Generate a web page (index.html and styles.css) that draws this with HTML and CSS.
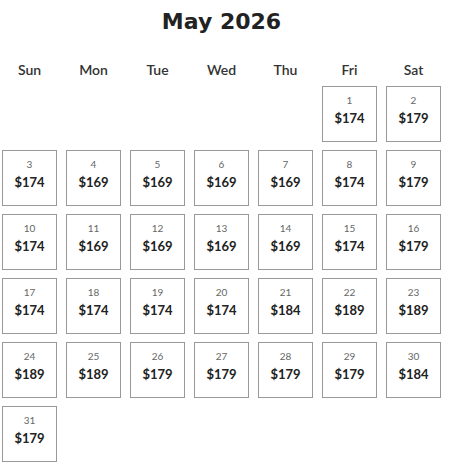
FILE: index.html
```html
<!DOCTYPE html>
<html>
<head>
<meta charset="utf-8">
<link rel="stylesheet" href="styles.css">
</head>
<body>
<div class="cal">
  <h1 class="title">May 2026</h1>
  <div class="grid">
    <div class="dow">Sun</div><div class="dow">Mon</div><div class="dow">Tue</div><div class="dow">Wed</div><div class="dow">Thu</div><div class="dow">Fri</div><div class="dow">Sat</div>
    <div class="empty"></div><div class="empty"></div><div class="empty"></div><div class="empty"></div><div class="empty"></div>
    <div class="day"><span class="d">1</span><span class="p">$174</span></div>
    <div class="day"><span class="d">2</span><span class="p">$179</span></div>
    <div class="day"><span class="d">3</span><span class="p">$174</span></div>
    <div class="day"><span class="d">4</span><span class="p">$169</span></div>
    <div class="day"><span class="d">5</span><span class="p">$169</span></div>
    <div class="day"><span class="d">6</span><span class="p">$169</span></div>
    <div class="day"><span class="d">7</span><span class="p">$169</span></div>
    <div class="day"><span class="d">8</span><span class="p">$174</span></div>
    <div class="day"><span class="d">9</span><span class="p">$179</span></div>
    <div class="day"><span class="d">10</span><span class="p">$174</span></div>
    <div class="day"><span class="d">11</span><span class="p">$169</span></div>
    <div class="day"><span class="d">12</span><span class="p">$169</span></div>
    <div class="day"><span class="d">13</span><span class="p">$169</span></div>
    <div class="day"><span class="d">14</span><span class="p">$169</span></div>
    <div class="day"><span class="d">15</span><span class="p">$174</span></div>
    <div class="day"><span class="d">16</span><span class="p">$179</span></div>
    <div class="day"><span class="d">17</span><span class="p">$174</span></div>
    <div class="day"><span class="d">18</span><span class="p">$174</span></div>
    <div class="day"><span class="d">19</span><span class="p">$174</span></div>
    <div class="day"><span class="d">20</span><span class="p">$174</span></div>
    <div class="day"><span class="d">21</span><span class="p">$184</span></div>
    <div class="day"><span class="d">22</span><span class="p">$189</span></div>
    <div class="day"><span class="d">23</span><span class="p">$189</span></div>
    <div class="day"><span class="d">24</span><span class="p">$189</span></div>
    <div class="day"><span class="d">25</span><span class="p">$189</span></div>
    <div class="day"><span class="d">26</span><span class="p">$179</span></div>
    <div class="day"><span class="d">27</span><span class="p">$179</span></div>
    <div class="day"><span class="d">28</span><span class="p">$179</span></div>
    <div class="day"><span class="d">29</span><span class="p">$179</span></div>
    <div class="day"><span class="d">30</span><span class="p">$184</span></div>
    <div class="day"><span class="d">31</span><span class="p">$179</span></div>
  </div>
</div>
</body>
</html>
```
FILE: styles.css
```css
html, body {
  margin: 0;
  padding: 0;
  background: #fff;
}
body {
  font-family: Lato, "Noto Sans", sans-serif;
  color: #222;
}
.cal {
  width: 439px;
  padding: 0 2px;
}
.title {
  margin: 0;
  padding-top: 9px;
  height: 50px;
  box-sizing: border-box;
  text-align: center;
  font-family: "DejaVu Sans", Lato, sans-serif;
  font-size: 22px;
  line-height: 26px;
  font-weight: 700;
  color: #222;
}
.grid {
  display: grid;
  grid-template-columns: repeat(7, 55px);
  column-gap: 9px;
  row-gap: 8px;
}
.dow {
  text-align: center;
  font-size: 14px;
  font-weight: 600;
  line-height: 16px;
  height: 28px;
  padding-top: 12px;
  box-sizing: border-box;
  color: #333;
}
.day {
  height: 56px;
  box-sizing: border-box;
  border: 1px solid #999;
  display: flex;
  flex-direction: column;
  align-items: center;
  padding-top: 7px;
}
.d {
  font-size: 10px;
  line-height: 12px;
  color: #666;
}
.p {
  margin-top: 3px;
  font-size: 13px;
  line-height: 18px;
  font-weight: 700;
  color: #222;
}
```
